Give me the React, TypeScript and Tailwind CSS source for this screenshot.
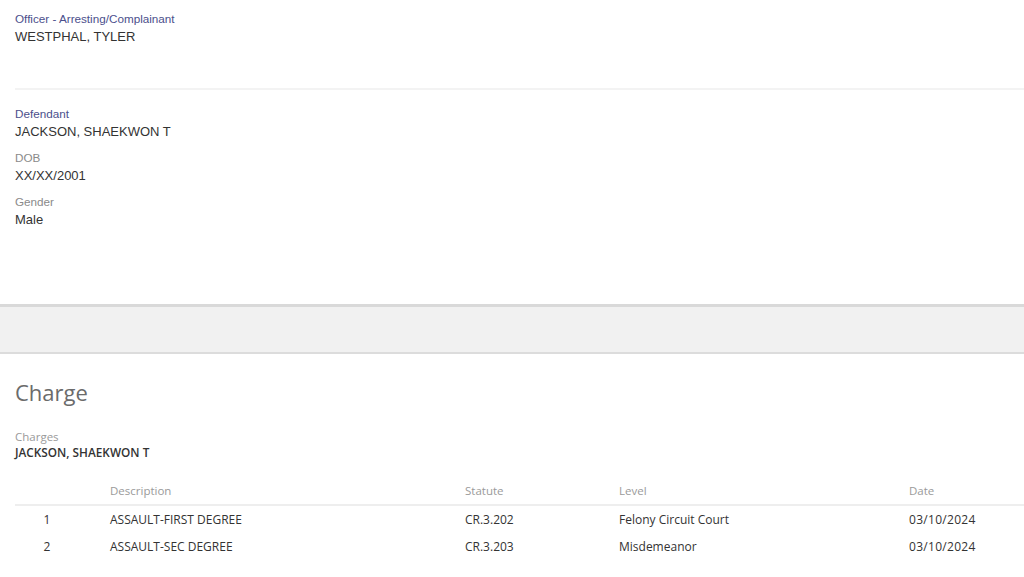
import React from 'react';

const charges = [
  { n: 1, desc: 'ASSAULT-FIRST DEGREE', statute: 'CR.3.202', level: 'Felony Circuit Court', date: '03/10/2024' },
  { n: 2, desc: 'ASSAULT-SEC DEGREE', statute: 'CR.3.203', level: 'Misdemeanor', date: '03/10/2024' },
];

function Field({ label, value, blue }: { label: string; value: string; blue?: boolean }) {
  return (
    <div className="mb-[10px]">
      <div className={`text-[11.7px] leading-[14px] ${blue ? 'text-[#4b4f8c]' : 'text-[#8a8a8a]'}`}>{label}</div>
      <div className="mt-[2px] text-[13px] leading-[18px] text-[#333]">{value}</div>
    </div>
  );
}

export default function App() {
  return (
    <div className="w-[1024px] h-[577px] overflow-hidden bg-white">
      <div className="font-['Liberation_Sans',Arial,sans-serif]">
        <div className="pl-[15px] pt-[12px] h-[88px]">
          <Field label="Officer - Arresting/Complainant" value="WESTPHAL, TYLER" blue />
        </div>
        <div className="ml-[15px] h-[2px] bg-[#f3f3f3]" />
        <div className="pl-[15px] pt-[17px] h-[214px]">
          <Field label="Defendant" value="JACKSON, SHAEKWON T" blue />
          <Field label="DOB" value="XX/XX/2001" />
          <Field label="Gender" value="Male" />
        </div>
      </div>

      <div className="h-[50px] border-t-[3px] border-b-[2px] border-t-[#d9d9d9] border-b-[#dcdcdc] bg-[#f1f1f1]" />

      <div className="pl-[15px] font-['Open_Sans',sans-serif]">
        <h2 className="mt-[23px] text-[22px] leading-[30px] text-[#6b6b6b]">Charge</h2>
        <div className="mt-[23px] text-[11.5px] leading-[14px] text-[#9a9a9a]">Charges</div>
        <div className="mt-[1px] text-[11.8px] leading-[14px] font-semibold text-[#333]">JACKSON, SHAEKWON T</div>

        <div className="mt-[19px] text-[12px]">
          <div className="flex h-[28px] items-center border-b-2 border-[#eeeeee] text-[11.5px] text-[#9a9a9a]">
            <div className="w-[95px]" />
            <div className="w-[355px]">Description</div>
            <div className="w-[154px]">Statute</div>
            <div className="w-[290px]">Level</div>
            <div>Date</div>
          </div>
          {charges.map((c) => (
            <div key={c.n} className="flex h-[27px] items-center text-[#333]">
              <div className="w-[64px] text-center">{c.n}</div>
              <div className="w-[31px]" />
              <div className="w-[355px]">{c.desc}</div>
              <div className="w-[154px]">{c.statute}</div>
              <div className="w-[290px]">{c.level}</div>
              <div className="tracking-[0.3px]">{c.date}</div>
            </div>
          ))}
        </div>
      </div>
    </div>
  );
}
